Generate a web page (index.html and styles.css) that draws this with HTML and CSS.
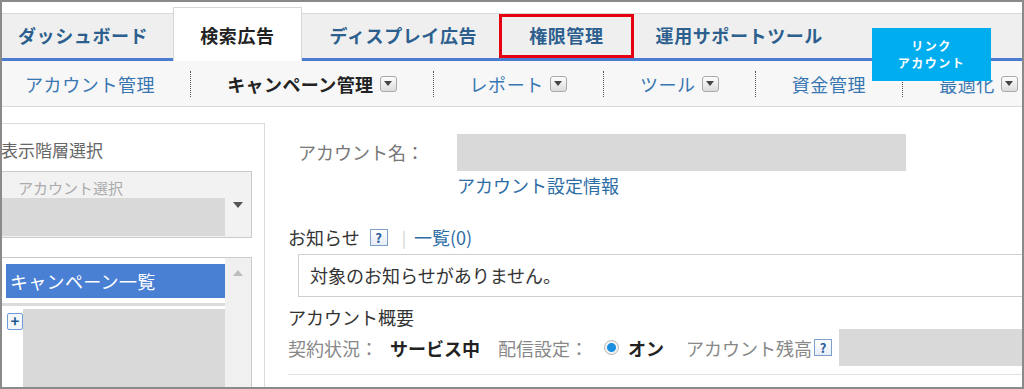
FILE: index.html
```html
<!DOCTYPE html>
<html lang="ja">
<head>
<meta charset="utf-8">
<title>検索広告</title>
<link rel="stylesheet" href="styles.css">
</head>
<body>
<div class="frame">
  <header class="tabs">
    <div class="tab tab-first">ダッシュボード</div>
    <div class="tab tab-active">検索広告</div>
    <div class="tab tab-display">ディスプレイ広告</div>
    <div class="tab tab-marked">権限管理</div>
    <div class="tab tab-ops">運用サポートツール</div>
    <div class="badge">リンク<br>アカウント</div>
  </header>

  <nav class="subnav">
    <div class="sub-item">アカウント管理</div>
    <div class="sub-item current">キャンペーン管理<span class="dd"></span></div>
    <div class="sub-item">レポート<span class="dd"></span></div>
    <div class="sub-item">ツール<span class="dd"></span></div>
    <div class="sub-item">資金管理</div>
    <div class="sub-item">最適化<span class="dd"></span></div>
  </nav>

  <div class="content">
    <aside class="side">
      <div class="side-title">表示階層選択</div>
      <div class="select">
        <div class="select-body">
          <div class="select-label">アカウント選択</div>
          <div class="select-field"></div>
        </div>
        <div class="select-arrow"><span class="tri-down"></span></div>
      </div>
      <div class="list">
        <div class="list-main">
          <div class="list-head">キャンペーン一覧</div>
          <div class="list-divider"></div>
          <div class="tree-row">
            <span class="plus">+</span>
            <div class="tree-block"></div>
          </div>
        </div>
        <div class="list-scroll"><span class="tri-up"></span></div>
      </div>
    </aside>

    <section class="main">
      <div class="acct-row">
        <div class="acct-label">アカウント名：</div>
        <div class="acct-value">
          <div class="gray-bar"></div>
          <div class="link acct-link">アカウント設定情報</div>
        </div>
      </div>

      <div class="notice-head">
        <span>お知らせ</span>
        <span class="help">?</span>
        <span class="pipe">|</span>
        <span class="link">一覧(0)</span>
      </div>
      <div class="notice-box">対象のお知らせがありません。</div>

      <div class="summary-title">アカウント概要</div>
      <div class="summary-row">
        <span class="muted">契約状況：</span>
        <span class="strong s-service">サービス中</span>
        <span class="muted s-delivery">配信設定：</span>
        <span class="radio"></span>
        <span class="strong s-on">オン</span>
        <span class="muted s-balance">アカウント残高</span>
        <span class="help s-help">?</span>
        <div class="balance-bar"></div>
      </div>
      <div class="summary-line"></div>
    </section>
  </div>
</div>
</body>
</html>
```

FILE: styles.css
```css
* { box-sizing: border-box; margin: 0; padding: 0; }

body {
  margin: 0;
  background: #fff;
  color: #333;
  font-family: "Noto Sans CJK JP", "Noto Sans", sans-serif;
}

.frame {
  width: 1024px;
  height: 389px;
  border: 2px solid #8a8a8a;
  position: relative;
  overflow: hidden;
  display: flex;
  flex-direction: column;
  background: #fff;
}

/* ---------- top tabs ---------- */
.tabs {
  flex: none;
  margin-top: 11px;
  height: 48px;
  border-top: 1px solid #d9d9d9;
  border-bottom: 3px solid #4b7ccf;
  background: #efefef;
  display: flex;
}

.tab {
  flex: none;
  display: flex;
  align-items: center;
  padding: 0 28px 2px;
  font-size: 18px;
  line-height: 1;
  letter-spacing: 0.6px;
  font-weight: bold;
  color: #2d5f8e;
  white-space: nowrap;
}

.tab-first { padding-left: 16px; padding-right: 25px; }

.tab-active {
  background: #fff;
  color: #222;
  border: 1px solid #d6d6d6;
  border-bottom: none;
  padding: 0 26px;
  margin: -7px 0 -3px;
}

.tab-display { padding-right: 22px; }

.tab-marked {
  border: 3px solid #e60012;
  padding: 0 27px 2px;
}

.tab-ops { padding-left: 22px; }

.badge {
  position: absolute;
  left: 870px;
  top: 26px;
  width: 119px;
  height: 53px;
  background: #00aeef;
  color: #fff;
  font-size: 12px;
  font-weight: bold;
  line-height: 17px;
  text-align: center;
  padding-top: 9px;
  letter-spacing: 1.5px;
}

/* ---------- sub navigation ---------- */
.subnav {
  flex: none;
  height: 46px;
  background: #f7f7f7;
  border-bottom: 1px solid #dadada;
  display: flex;
  align-items: center;
}

.sub-item {
  flex: none;
  display: flex;
  align-items: center;
  height: 26px;
  padding: 0 36px;
  border-left: 1px dotted #555;
  font-size: 18px;
  line-height: 1;
  letter-spacing: 0.6px;
  color: #3876b2;
  white-space: nowrap;
}

.sub-item:first-child { border-left: none; padding-left: 23px; padding-right: 35px; }

.sub-item.current { font-weight: bold; color: #222; letter-spacing: 0.4px; }

.dd {
  width: 17px;
  height: 16px;
  margin-left: 6px;
  border: 1px solid #a9a9a9;
  border-radius: 3px;
  background: linear-gradient(#fdfdfd, #dcdcdc);
  display: flex;
  align-items: center;
  justify-content: center;
}

.dd::after {
  content: "";
  border-left: 4px solid transparent;
  border-right: 4px solid transparent;
  border-top: 5px solid #444;
}

/* ---------- content ---------- */
.content {
  flex: 1;
  min-height: 0;
  display: flex;
}

.side {
  flex: none;
  width: 263px;
  margin-top: 16px;
  border-top: 1px solid #dcdcdc;
  border-right: 1px solid #dcdcdc;
  display: flex;
  flex-direction: column;
}

.side-title {
  padding-top: 16px;
  font-size: 17px;
  line-height: 20px;
  color: #666;
  margin-left: -1px;
  margin-bottom: 11px;
}

.select {
  flex: none;
  width: 250px;
  height: 67px;
  border: 1px solid #cbcbcb;
  border-left: none;
  background: #f2f2f2;
  display: flex;
}

.select-body { width: 223px; }

.select-label {
  height: 26px;
  padding: 6px 0 0 16px;
  font-size: 15px;
  line-height: 20px;
  color: #aaa;
}

.select-field {
  height: 38px;
  background: #d9d9d9;
}

.select-arrow {
  flex: 1;
  display: flex;
  justify-content: center;
  padding-top: 30px;
}

.tri-down {
  width: 0;
  height: 0;
  border-left: 5px solid transparent;
  border-right: 5px solid transparent;
  border-top: 6px solid #555;
}

.list {
  flex: 1;
  width: 250px;
  margin-top: 19px;
  border: 1px solid #cbcbcb;
  border-left: none;
  border-bottom: none;
  background: #f0f0f0;
  display: flex;
}

.list-main {
  width: 223px;
  background: #fff;
  padding-top: 6px;
}

.list-head {
  margin-left: 4px;
  height: 34px;
  padding-left: 4px;
  background: #4a80d4;
  color: #fff;
  font-size: 18px;
  line-height: 34px;
  letter-spacing: 0.3px;
}

.list-divider {
  margin-top: 5px;
  height: 3px;
  background: #dcdcdc;
}

.tree-row {
  margin-top: 3px;
  display: flex;
}

.plus {
  flex: none;
  width: 16px;
  height: 17px;
  margin: 4px 0 0 5px;
  border: 1px solid #6d9cd6;
  border-radius: 2px;
  background: #f4f8fd;
  color: #1b5a8c;
  font-size: 15px;
  font-weight: bold;
  line-height: 14px;
  text-align: center;
}

.tree-block {
  flex: 1;
  height: 100px;
  background: #d9d9d9;
}

.list-scroll {
  flex: 1;
  display: flex;
  justify-content: center;
  padding-top: 12px;
}

.tri-up {
  width: 0;
  height: 0;
  border-left: 5px solid transparent;
  border-right: 5px solid transparent;
  border-bottom: 6px solid #bdbdbd;
}

/* ---------- main ---------- */
.main {
  flex: 1;
  min-width: 0;
  padding: 27px 0 0 23px;
  font-size: 18px;
  line-height: 20px;
}

.link { color: #2d6da6; }

.acct-row {
  display: flex;
  padding-left: 10px;
}

.acct-label {
  width: 159px;
  line-height: 37px;
  color: #777;
}

.gray-bar {
  width: 449px;
  height: 37px;
  background: #d9d9d9;
}

.acct-link { margin-top: 4px; }

.notice-head {
  margin-top: 32px;
  display: flex;
  align-items: center;
  color: #333;
}

.help {
  width: 18px;
  height: 17px;
  margin-left: 10px;
  border: 1px solid #7d9fc9;
  background: linear-gradient(#ffffff, #e6edf7);
  color: #2a5d9c;
  font-size: 13px;
  font-weight: bold;
  line-height: 15px;
  text-align: center;
}

.pipe {
  margin: 0 8px 0 14px;
  color: #d0d0d0;
  font-size: 16px;
}

.notice-box {
  margin: 7px 0 0 10px;
  height: 43px;
  border: 1px solid #cfcfcf;
  border-right: none;
  padding-left: 11px;
  line-height: 41px;
  color: #333;
}

.summary-title {
  margin-top: 10px;
  color: #333;
}

.summary-row {
  margin-top: 2px;
  height: 37px;
  display: flex;
  align-items: center;
  white-space: nowrap;
}

.muted { color: #888; }
.strong { font-weight: bold; color: #222; }

.s-service { margin-left: 12px; }
.s-delivery { margin-left: 18px; }

.radio {
  width: 15px;
  height: 15px;
  margin-left: 16px;
  border-radius: 50%;
  border: 1px solid #b5b5b5;
  background: radial-gradient(circle, #1a8ee0 0, #1a8ee0 4px, #f2f2f2 5px);
}

.s-on { margin-left: 9px; }
.s-balance { margin-left: 22px; }
.s-help { margin-left: 2px; }

.balance-bar {
  flex: 1;
  height: 37px;
  margin-left: 7px;
  background: #d9d9d9;
}

.summary-line {
  margin-top: 8px;
  height: 1px;
  background: #e2e2e2;
}
```
